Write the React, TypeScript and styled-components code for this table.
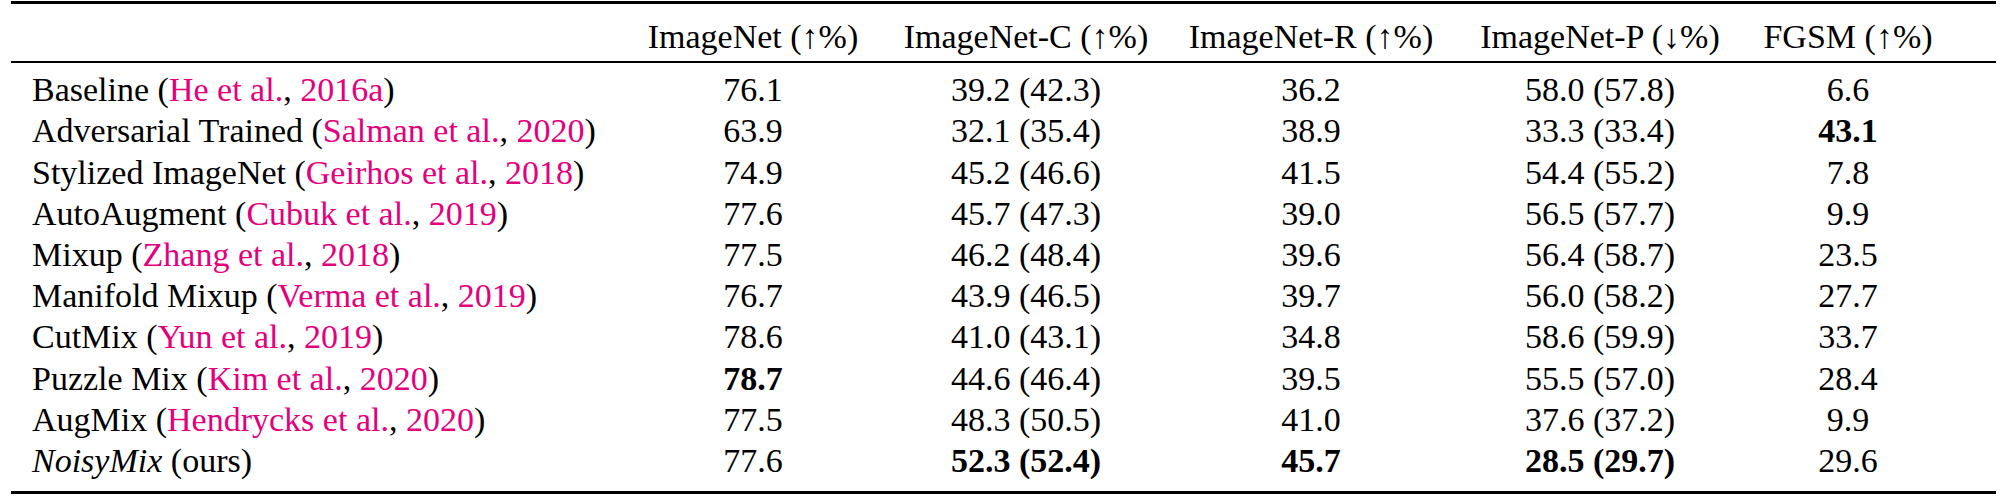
import React from 'react';
import styled, { createGlobalStyle } from 'styled-components';

interface ResultRow {
  method: string;
  cite?: string;
  year?: string;
  italic?: boolean;
  values: { text: string; bold?: boolean }[];
}

const headers = [
  'ImageNet (↑%)',
  'ImageNet-C (↑%)',
  'ImageNet-R (↑%)',
  'ImageNet-P (↓%)',
  'FGSM (↑%)',
];

const v = (text: string, bold = false) => ({ text, bold });

const rows: ResultRow[] = [
  { method: 'Baseline', cite: 'He et al.', year: '2016a', values: [v('76.1'), v('39.2 (42.3)'), v('36.2'), v('58.0 (57.8)'), v('6.6')] },
  { method: 'Adversarial Trained', cite: 'Salman et al.', year: '2020', values: [v('63.9'), v('32.1 (35.4)'), v('38.9'), v('33.3 (33.4)'), v('43.1', true)] },
  { method: 'Stylized ImageNet', cite: 'Geirhos et al.', year: '2018', values: [v('74.9'), v('45.2 (46.6)'), v('41.5'), v('54.4 (55.2)'), v('7.8')] },
  { method: 'AutoAugment', cite: 'Cubuk et al.', year: '2019', values: [v('77.6'), v('45.7 (47.3)'), v('39.0'), v('56.5 (57.7)'), v('9.9')] },
  { method: 'Mixup', cite: 'Zhang et al.', year: '2018', values: [v('77.5'), v('46.2 (48.4)'), v('39.6'), v('56.4 (58.7)'), v('23.5')] },
  { method: 'Manifold Mixup', cite: 'Verma et al.', year: '2019', values: [v('76.7'), v('43.9 (46.5)'), v('39.7'), v('56.0 (58.2)'), v('27.7')] },
  { method: 'CutMix', cite: 'Yun et al.', year: '2019', values: [v('78.6'), v('41.0 (43.1)'), v('34.8'), v('58.6 (59.9)'), v('33.7')] },
  { method: 'Puzzle Mix', cite: 'Kim et al.', year: '2020', values: [v('78.7', true), v('44.6 (46.4)'), v('39.5'), v('55.5 (57.0)'), v('28.4')] },
  { method: 'AugMix', cite: 'Hendrycks et al.', year: '2020', values: [v('77.5'), v('48.3 (50.5)'), v('41.0'), v('37.6 (37.2)'), v('9.9')] },
  { method: 'NoisyMix', italic: true, values: [v('77.6'), v('52.3 (52.4)', true), v('45.7', true), v('28.5 (29.7)', true), v('29.6')] },
];

const App: React.FC = () => {
  return (
    <>
      <GlobalStyle />
      <Page>
        <Table>
          <Rule weight={3} />
          <HeaderRow>
            <Cell align="left" />
            {headers.map(h => (
              <Cell key={h} align="center">{h}</Cell>
            ))}
          </HeaderRow>
          <Rule weight={2} />
          <Body>
            {rows.map(row => (
              <Row key={row.method}>
                <Cell align="left">
                  {row.italic ? <Em>{row.method}</Em> : row.method}{' '}
                  {row.cite ? (
                    <>
                      (<Cite>{row.cite}</Cite>, <Cite>{row.year}</Cite>)
                    </>
                  ) : (
                    '(ours)'
                  )}
                </Cell>
                {row.values.map((val, i) => (
                  <Cell key={i} align="center" bold={val.bold}>
                    {val.text}
                  </Cell>
                ))}
              </Row>
            ))}
          </Body>
          <Rule weight={3} />
        </Table>
      </Page>
    </>
  );
};

export default App;

const GlobalStyle = createGlobalStyle`
  body {
    margin: 0;
    background: #ffffff;
    font-family: 'Liberation Serif', serif;
  }
`;

const Page = styled.div`
  width: 2011px;
  height: 499px;
  padding: 1px 0 0 11px;
  box-sizing: border-box;
  background: #ffffff;
  color: #000000;
  font-family: 'Liberation Serif', serif;
`;

const Table = styled.div`
  width: 1985px;
  display: flex;
  flex-direction: column;
`;

const Rule = styled.div<{ weight: number }>`
  height: ${props => props.weight}px;
  background: #000000;
`;

const Row = styled.div`
  display: grid;
  grid-template-columns: 606px 272px 274px 296px 282px 214px;
  padding-right: 41px;
  font-family: 'Liberation Serif', serif;
  font-size: 34px;
  line-height: 41.2px;
`;

const HeaderRow = styled(Row)`
  padding-top: 12px;
  padding-bottom: 4px;
`;

const Body = styled.div`
  display: flex;
  flex-direction: column;
  padding: 6px 0 10px;
`;

const Cell = styled.div<{ align: 'left' | 'center'; bold?: boolean }>`
  text-align: ${props => props.align};
  padding-left: ${props => (props.align === 'left' ? '21px' : '0')};
  font-weight: ${props => (props.bold ? 'bold' : 'normal')};
  white-space: nowrap;
`;

const Cite = styled.span`
  color: #e4007c;
`;

const Em = styled.em`
  font-style: italic;
`;
